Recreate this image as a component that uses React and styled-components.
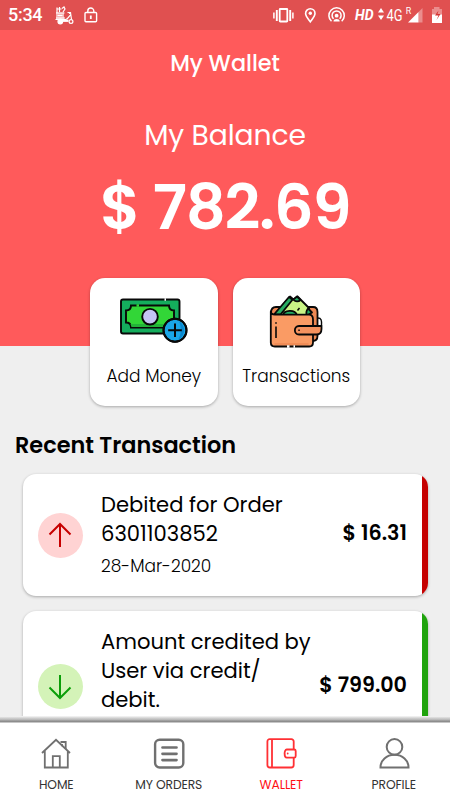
import React from 'react';
import styled, { createGlobalStyle } from 'styled-components';

const GlobalStyle = createGlobalStyle`
  * {
    box-sizing: border-box;
  }

  body {
    margin: 0;
    background: #efefef;
    font-family: Poppins, Inter, sans-serif;
    color: #000;
  }

  svg {
    display: block;
    flex: none;
  }
`;

const Screen = styled.div`
  width: 450px;
  height: 800px;
  display: flex;
  flex-direction: column;
  overflow: hidden;
  background: #efefef;
`;

const StatusBar = styled.div`
  height: 30px;
  flex: none;
  display: flex;
  align-items: center;
  gap: 10px;
  padding-left: 8px;
  background: #e05050;
  color: #fff;
  font-family: Roboto, sans-serif;
`;

const Clock = styled.span`
  width: 36px;
  font-size: 18px;
  font-weight: 500;
  line-height: 30px;
  letter-spacing: -0.3px;
`;

const StatusGroup = styled.div`
  margin-left: auto;
`;

const Header = styled.header`
  height: 316px;
  flex: none;
  display: flex;
  flex-direction: column;
  align-items: center;
  background: #ff5a5b;
  color: #fff;
  white-space: nowrap;
`;

const Title = styled.h1`
  margin: 16px 0 0;
  font-size: 22.3px;
  font-weight: 500;
  line-height: 35px;
`;

const BalanceLabel = styled.div`
  margin-top: 35px;
  font-size: 28.2px;
  font-weight: 400;
  line-height: 39px;
  letter-spacing: -0.1px;
`;

const Balance = styled.div`
  margin-top: 12px;
  font-size: 62.5px;
  font-weight: 600;
  line-height: 80px;
  letter-spacing: -1.4px;
`;

const Tiles = styled.div`
  flex: none;
  display: flex;
  justify-content: center;
  gap: 15px;
  margin-top: -68px;
`;

const Tile = styled.button`
  width: 127.5px;
  height: 128px;
  display: flex;
  flex-direction: column;
  align-items: center;
  padding: 15px 0 0;
  border: none;
  border-radius: 15px;
  background: #fff;
  box-shadow: 0 1px 3px rgba(0, 0, 0, 0.3);
  font-family: inherit;
  color: #000;
  white-space: nowrap;
`;

const TileLabel = styled.span`
  margin-top: 13.500px;
  font-size: 17px;
  font-weight: 300;
  line-height: 26px;
`;

const SectionTitle = styled.h2`
  margin: 24px 0 0 15px;
  flex: none;
  font-size: 22.4px;
  font-weight: 600;
  line-height: 31px;
`;

const List = styled.div`
  flex: 1;
  min-height: 0;
  overflow: hidden;
  display: flex;
  flex-direction: column;
  gap: 15px;
  padding: 13px 22.5px 0;
`;

const Card = styled.div`
  flex: none;
  display: flex;
  align-items: center;
  padding-left: 15px;
  border-radius: 13px;
  overflow: hidden;
  background: #fff;
  box-shadow: 0 1px 3px rgba(0, 0, 0, 0.3);
  white-space: nowrap;
`;

const Stripe = styled.div`
  width: 5.5px;
  align-self: stretch;
  margin-left: 15px;
  background: ${(props) => props.$color};
`;

const Circle = styled.div`
  width: 45px;
  height: 45px;
  flex: none;
  display: flex;
  align-items: center;
  justify-content: center;
  border-radius: 50%;
  background: ${(props) => props.$color};
`;

const Details = styled.div`
  flex: 1;
  margin-left: 18.5px;
  padding: 16px 0 18px;
`;

const Line = styled.div`
  font-size: 21.1px;
  font-weight: 400;
  line-height: 29px;
`;

const DateText = styled.div`
  height: 24px;
  margin-top: 6px;
  font-size: 17px;
  font-weight: 300;
  line-height: 24px;
`;

const Amount = styled.div`
  padding-bottom: 4px;
  font-size: 20.7px;
  font-weight: 600;
  line-height: 30px;
`;

const NavBar = styled.nav`
  height: 84px;
  flex: none;
  display: grid;
  grid-template-columns: repeat(4, 1fr);
  padding-top: 22px;
  background: linear-gradient(#f8f8f8 0, #d2d2d2 2px, #b4b4b4 4px, #8d8d8d 5px, #8d8d8d 6px, #fff 7px);
`;

const NavItem = styled.a`
  display: flex;
  flex-direction: column;
  align-items: center;
  color: ${(props) => (props.$active ? '#ff1014' : '#333')};
`;

const NavLabel = styled.span`
  margin-top: 6px;
  font-size: 12.3px;
  font-weight: 400;
  line-height: 17px;
  letter-spacing: -0.1px;
`;

const ScooterIcon = () => (
  <svg width="20" height="19" viewBox="0 0 20 19" fill="none" stroke="#fff" strokeWidth="1.2">
    <path d="M2 6.500h8v6.500H2z" fill="#f5b5b5" stroke="none" />
    <path d="M3 1.500v5M5.500 1v5M8 2.500l2-1.500 1 2-2 3M2 7h8.500M3.500 9.500h5M2.500 3h5M2 12h9" />
    <path d="M13.500 6.500h3l1 7M15 7.500l2-1M1.500 13.500h10c2.500 0 3-3 5-4.500" />
    <circle cx="6.300" cy="15.500" r="2.300" fill="#fff" />
    <circle cx="17" cy="15.500" r="1.900" fill="#e05050" />
    <path d="M9 14.800h5.500" strokeWidth="2.200" />
  </svg>
);

const LockIcon = () => (
  <svg width="14" height="16" viewBox="0 0 14 16" fill="none" stroke="#fff" strokeWidth="1.400">
    <rect x="1" y="5.500" width="11.600" height="9.300" rx="1" />
    <path d="M3.800 5.500V4a3 3 0 0 1 6 0v1.500" />
    <path d="M6.800 8.500v3.500" strokeWidth="1.800" />
  </svg>
);

const StatusIcons = () => (
  <StatusGroup>
    <svg width="178" height="30" viewBox="272 0 178 30" fill="none" stroke="#fff">
      <rect x="279.700" y="9" width="7.600" height="12.500" strokeWidth="1.800" rx="0.500" />
      <path d="M276.800 10v11M290.200 10v11" strokeWidth="1.900" />
      <path d="M273.900 12.500v6M292.900 12.500v6" strokeWidth="1.500" />
      <path d="M310.300 21.800c-2.600-3.600-4.700-5.800-4.700-8.400a4.700 4.700 0 0 1 9.400 0c0 2.600-2.100 4.800-4.700 8.400z" strokeWidth="1.600" />
      <circle cx="310.300" cy="13.300" r="1.700" fill="#fff" stroke="none" />
      <path d="M331.500 21.300a7.700 7.700 0 1 1 10.200 0" strokeWidth="1.500" />
      <path d="M333.600 18.800a4.500 4.500 0 1 1 6 0" strokeWidth="1.500" />
      <circle cx="336.600" cy="15.700" r="1.900" fill="#fff" stroke="none" />
      <path d="M333.500 21.500c0-3.200 6.200-3.200 6.200 0z" fill="#fff" stroke="none" />
      <g fill="#fff" stroke="none" fontFamily="Roboto, sans-serif">
        <text x="355" y="20" fontSize="15" fontWeight="700" fontStyle="italic" textLength="18.500" lengthAdjust="spacingAndGlyphs">HD</text>
        <path d="M378 12.500l3-4.500 3 4.500zM378 15.500l3 4.500 3-4.500z" />
        <text x="386.500" y="20.500" fontSize="16" textLength="16" lengthAdjust="spacingAndGlyphs">4G</text>
        <text x="405.800" y="13.500" fontSize="9" textLength="5.500" lengthAdjust="spacingAndGlyphs">R</text>
        <path d="M408 22.500L418.500 12v10.500z" />
        <path d="M418.500 12l4-4v14.500h-4z" opacity="0.350" />
        <path d="M434 7h5.500v2h2.500v6h-10V9h2z" opacity="0.350" />
        <path d="M432 14.500h10V23h-10z" />
      </g>
      <path d="M438.500 10.500l-3.500 5h3.500l-2 4.500 4-6h-3z" fill="#d33232" stroke="none" />
    </svg>
  </StatusGroup>
);

const MoneyIcon = () => (
  <svg width="72" height="56" viewBox="0 0 72 56" fill="none" stroke="#080808" strokeWidth="1.900">
    <rect x="3" y="6.500" width="58.500" height="34" rx="2" fill="#14ad5d" />
    <path d="M13 12.500h38c0 3 2 5 5 5v12c-3 0-5 2-5 5H13c0-3-2-5-5-5v-12c3 0 5-2 5-5z" fill="#32d637" />
    <path d="M12.500 31h39v3h-38z" fill="#23b339" stroke="none" />
    <path d="M18.500 12.500h2.500" stroke="#32d637" strokeWidth="2.500" />
    <path d="M46.500 6.500h1.500" stroke="#fff" strokeWidth="2.500" />
    <circle cx="32" cy="23.700" r="7.800" fill="#c5c4f5" />
    <circle cx="57" cy="37.300" r="11.500" fill="#1aa5e6" />
    <path d="M61 28c7 5 7 14-1 19 3-5 4-12 1-19z" fill="#0987ce" stroke="none" />
    <circle cx="57" cy="37.300" r="11.500" />
    <path d="M57 30.500v13.600M50.200 37.300h13.600" strokeWidth="2" />
  </svg>
);

const CashWalletIcon = () => (
  <svg width="60" height="56" viewBox="266 293 60 56" fill="none" stroke="#080808" strokeWidth="1.800" strokeLinejoin="round">
    <path d="M271 313c0-5 2-6 5-6h37c3 0 4.500 2 4.500 5v24c0 3-2 5-5 5h-3z" fill="#ee8853" />
    <path d="M274 315l16-18.500 3.500 3 4-3 11.500 11.500 1 8h-36z" fill="#c9f485" />
    <path d="M274 314.500l15-17.500 3.500 2.800-12 14.700z" fill="#28ad62" />
    <path d="M293.500 299.500l3.500-3 3.500 3.500c-2 2-5 2-7-.5zM308 308.500l4 4-5 3c-1-2-.5-5 1-7z" fill="#23ae64" />
    <path d="M283 315c1-5 12-6 14 0z" fill="#23ae64" />
    <path d="M297.500 310.500l2-2.500" strokeWidth="1.500" />
    <path d="M270.800 311.500v31c0 2.500 1.500 4 4 4h34.500c2.500 0 3.700-1.500 3.700-4v-23c0-3-1.500-4.800-4-4.800H275c-3 0-4.200-1-4.200-3.200z" fill="#fa9b64" />
    <path d="M274.500 344h34" stroke="#ee8853" strokeWidth="1.500" />
    <path d="M287 346.500h2.500M293.500 346.500h1.500" stroke="#fff" strokeWidth="2.300" />
    <path d="M276 322.300v1.500M276 326.500v11.500" strokeWidth="1.600" />
    <path d="M318 318c3 0 4 2 3.500 8" strokeWidth="1.400" />
    <path d="M299 326h22.500v3c0 4-2 5.500-5 5.500H299c-5.500 0-5.500-8.500 0-8.500z" fill="#f5925e" />
    <path d="M298.300 330.300h1.500" strokeWidth="1.500" />
  </svg>
);

const ArrowIcon = ({ down }) => (
  <svg width="24" height="26" viewBox="0 0 24 26" fill="none" stroke={down ? '#0b9e09' : '#c70000'} strokeWidth="2">
    {down ? <path d="M12 1v23M1.500 13.500L12 24l10.500-10.500" /> : <path d="M12 25V2M1.500 12.500L12 2l10.500 10.500" />}
  </svg>
);

const HomeIcon = () => (
  <svg width="32" height="32" viewBox="0 0 32 32" fill="none" stroke="#707070" strokeWidth="1.800">
    <path d="M2 15L16 1.800l14 13.200M4.800 13V29.500h23V13M12.800 29.500V18.200h7v11.300" />
    <path d="M20.500 4h5.200v7M22 6v2.200" />
  </svg>
);

const OrdersIcon = () => (
  <svg width="32" height="32" viewBox="0 0 32 32" fill="none" stroke="#707070">
    <rect x="2.100" y="1.700" width="28.200" height="27.800" rx="4.500" strokeWidth="2.400" />
    <path d="M9.500 9.500h14M9.500 15.800h14M9.500 22.100h14" strokeWidth="2.700" strokeLinecap="round" />
  </svg>
);

const WalletIcon = () => (
  <svg width="32" height="32" viewBox="-0.700 0 32 32" fill="none" stroke="#ff3034" strokeWidth="1.800">
    <path d="M28 11V3.500A2.300 2.300 0 0 0 25.700 1.200H4A2.300 2.300 0 0 0 1.700 3.500V27A2.500 2.500 0 0 0 4.200 29.500H25.500A2.500 2.500 0 0 0 28 27V19.500" />
    <path d="M6.300 1.500v28" />
    <path d="M21 11.500h7.500c1 0 1.500.7 1.500 1.500v5c0 1-.5 1.600-1.500 1.600H21c-2.800 0-2.800-8.100 0-8.100z" />
    <circle cx="22" cy="15.500" r="0.900" fill="#ff3034" stroke="none" />
  </svg>
);

const ProfileIcon = () => (
  <svg width="32" height="32" viewBox="-0.500 0 32 32" fill="none" stroke="#707070" strokeWidth="2">
    <circle cx="16" cy="8.900" r="7.800" />
    <path d="M2 29.500c0-7.300 6-12.700 14-12.700S30 22.200 30 29.500z" />
  </svg>
);

const transactions = [
  {
    id: 1,
    lines: ['Debited for Order', '6301103852'],
    date: '28-Mar-2020',
    amount: '$ 16.31',
    accent: '#c50000',
    circle: '#ffd3d3',
  },
  {
    id: 2,
    lines: ['Amount credited by', 'User via credit/', 'debit.'],
    amount: '$ 799.00',
    accent: '#1fa30d',
    circle: '#d4f3b8',
    credit: true,
  },
];

const navItems = [
  { label: 'HOME', Icon: HomeIcon },
  { label: 'MY ORDERS', Icon: OrdersIcon },
  { label: 'WALLET', Icon: WalletIcon, active: true },
  { label: 'PROFILE', Icon: ProfileIcon },
];

const App = () => (
  <>
    <GlobalStyle />
    <Screen>
      <StatusBar>
        <Clock>5:34</Clock>
        <ScooterIcon />
        <LockIcon />
        <StatusIcons />
      </StatusBar>
      <Header>
        <Title>My Wallet</Title>
        <BalanceLabel>My Balance</BalanceLabel>
        <Balance>$ 782.69</Balance>
      </Header>
      <Tiles>
        <Tile>
          <MoneyIcon />
          <TileLabel>Add Money</TileLabel>
        </Tile>
        <Tile>
          <CashWalletIcon />
          <TileLabel>Transactions</TileLabel>
        </Tile>
      </Tiles>
      <SectionTitle>Recent Transaction</SectionTitle>
      <List>
        {transactions.map((item) => (
          <Card key={item.id}>
            <Circle $color={item.circle}>
              <ArrowIcon down={item.credit} />
            </Circle>
            <Details>
              {item.lines.map((line) => (
                <Line key={line}>{line}</Line>
              ))}
              <DateText>{item.date}</DateText>
            </Details>
            <Amount>{item.amount}</Amount>
            <Stripe $color={item.accent} />
          </Card>
        ))}
      </List>
      <NavBar>
        {navItems.map(({ label, Icon, active }) => (
          <NavItem key={label} $active={active}>
            <Icon />
            <NavLabel>{label}</NavLabel>
          </NavItem>
        ))}
      </NavBar>
    </Screen>
  </>
);

export default App;
